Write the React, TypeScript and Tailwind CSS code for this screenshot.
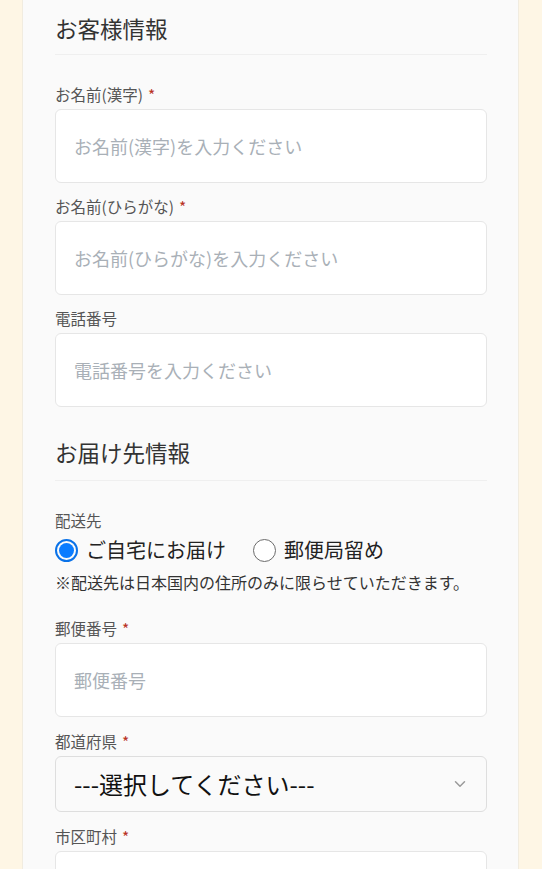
import { ChevronDown } from 'lucide-react'

const font = { fontFamily: '"Noto Sans CJK JP", "Noto Sans", sans-serif' }

function SectionTitle({ children, spacing }: { children: string; spacing: string }) {
  return (
    <h2 className={`${spacing} border-b border-[#efefef] text-[22.5px] leading-[32px] text-[#333]`}>
      {children}
    </h2>
  )
}

function FieldLabel({ children, required }: { children: string; required?: boolean }) {
  return (
    <p className="text-[15.5px] leading-[20px] text-[#555] mb-[5px]">
      {children}
      {required && <span className="ml-[5px] text-[#b8321f]">*</span>}
    </p>
  )
}

function TextField({ label, placeholder, required, top = 'mt-[14px]' }: {
  label: string
  placeholder: string
  required?: boolean
  top?: string
}) {
  return (
    <div className={top}>
      <FieldLabel required={required}>{label}</FieldLabel>
      <input
        placeholder={placeholder}
        className="block w-full h-[74px] bg-white border border-[#e6e6e6] rounded-[6px] pl-[18px] text-[18px] text-[#333] placeholder:text-[#a9b0b7] outline-none"
        style={font}
      />
    </div>
  )
}

function Radio({ checked, label }: { checked?: boolean; label: string }) {
  return (
    <label className="flex items-center gap-[8px]">
      {checked ? (
        <span className="w-[23px] h-[23px] rounded-full border-[2px] border-[#0a72e8] flex items-center justify-center">
          <span className="w-[15px] h-[15px] rounded-full bg-[#0a7cff]" />
        </span>
      ) : (
        <span className="w-[23px] h-[23px] rounded-full border-[1.5px] border-[#6b6b6b] bg-white" />
      )}
      <span className="text-[20px] leading-[26px] text-[#222]">{label}</span>
    </label>
  )
}

export default function App() {
  return (
    <div className="min-h-screen bg-[#fef6e5] pl-[22px] pr-[23px]" style={font}>
      <div className="bg-[#fafafa] border-x border-[#f1ece0] pl-[32px] pr-[31px] pb-[40px]">
        <SectionTitle spacing="pt-[12px] pb-[10px]">お客様情報</SectionTitle>

        <TextField top="mt-[29px]" label="お名前(漢字)" placeholder="お名前(漢字)を入力ください" required />
        <TextField top="mt-[13px]" label="お名前(ひらがな)" placeholder="お名前(ひらがな)を入力ください" required />
        <TextField top="mt-[13px]" label="電話番号" placeholder="電話番号を入力ください" />

        <SectionTitle spacing="mt-[29px] pb-[12px]">お届け先情報</SectionTitle>

        <div className="mt-[29px]">
          <p className="text-[15.5px] leading-[20px] text-[#555]">配送先</p>
          <div className="mt-[7px] flex items-center gap-[27px]">
            <Radio checked label="ご自宅にお届け" />
            <Radio label="郵便局留め" />
          </div>
          <p className="mt-[7px] text-[16px] leading-[24px] text-[#333]">
            ※配送先は日本国内の住所のみに限らせていただきます。
          </p>
        </div>

        <TextField top="mt-[24px]" label="郵便番号" placeholder="郵便番号" required />

        <div className="mt-[14px]">
          <FieldLabel required>都道府県</FieldLabel>
          <div className="h-[56px] bg-[#fafafa] border border-[#dedede] rounded-[6px] pl-[18px] pr-[17px] flex items-center justify-between">
            <span className="text-[24px] text-[#111]">---選択してください---</span>
            <ChevronDown className="w-[18px] h-[18px] text-[#9a9a9a]" strokeWidth={2} />
          </div>
        </div>

        <TextField label="市区町村" placeholder="市区町村を入力ください" required />
      </div>
    </div>
  )
}
